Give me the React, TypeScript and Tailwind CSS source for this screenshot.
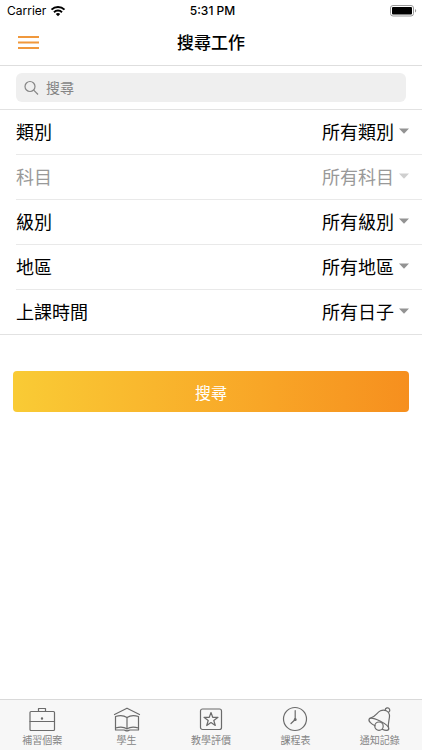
import type { ReactNode } from "react";

type Field = { id: string; label: string; value: string; disabled?: boolean };

const fields: Field[] = [
  { id: "category", label: "類別", value: "所有類別" },
  { id: "subject", label: "科目", value: "所有科目", disabled: true },
  { id: "level", label: "級別", value: "所有級別" },
  { id: "district", label: "地區", value: "所有地區" },
  { id: "time", label: "上課時間", value: "所有日子" },
];

function StatusBar() {
  return (
    <div className="flex h-5 items-center pt-[2px] pr-1 pl-[7px] text-xs text-black">
      <div className="flex flex-1 items-center gap-1">
        <span>Carrier</span>
        <svg className="h-3 w-4" viewBox="0 0 16 12" fill="none" stroke="#000" strokeWidth="2">
          <path d="M1.5 4.6a9.3 9.3 0 0 1 13 0" />
          <path d="M4 7.2a5.7 5.7 0 0 1 8 0" />
          <path d="M5.8 9a3.1 3.1 0 0 1 4.4 0L8 11.3z" fill="#000" stroke="none" />
        </svg>
      </div>
      <span className="font-medium">5:31 PM</span>
      <div className="flex flex-1 justify-end">
        <svg className="h-3 w-7" viewBox="0 0 28 12" aria-label="Battery">
          <rect x="0.5" y="0.5" width="23" height="10.5" rx="2.5" fill="none" stroke="#999" />
          <rect x="2" y="2" width="20" height="7.5" rx="1" fill="#000" />
          <path d="M25 4v3.5c1.6-.5 1.6-3 0-3.5z" fill="#999" />
        </svg>
      </div>
    </div>
  );
}

function SelectRow({ field, last }: { field: Field; last: boolean }) {
  return (
    <div
      className={
        "flex items-center justify-between pt-[2px] text-lg " +
        (last ? "h-11 " : "h-[45px] border-b border-[#e9e9e9] ") +
        (field.disabled ? "text-[#999]" : "text-black")
      }
    >
      <label htmlFor={field.id}>{field.label}</label>
      <div className="relative">
        <select
          id={field.id}
          disabled={field.disabled}
          className="h-10 w-40 appearance-none bg-transparent pr-7 [text-align-last:right] opacity-100 outline-none"
        >
          <option>{field.value}</option>
        </select>
        <svg
          className={
            "pointer-events-none absolute top-[15px] right-3 h-[6px] w-3 " +
            (field.disabled ? "text-[#cfcfcf]" : "text-[#939393]")
          }
          viewBox="0 0 12 6"
          fill="currentColor"
        >
          <path d="M1 0.5h10L6 5.7z" />
        </svg>
      </div>
    </div>
  );
}

function TabIcon({ children }: { children: ReactNode }) {
  return (
    <svg
      className="h-7 w-7"
      viewBox="0 0 28 28"
      fill="none"
      stroke="#6b6b6b"
      strokeWidth="1.2"
      strokeLinecap="round"
      strokeLinejoin="round"
    >
      {children}
    </svg>
  );
}

const tabs: { label: string; icon: ReactNode }[] = [
  {
    label: "補習個案",
    icon: (
      <>
        <rect x="2" y="7.5" width="24.5" height="19" rx="1" />
        <path d="M10.5 7.500V4.500h7v3M2 17.500h24.500" />
        <circle cx="14" cy="14.500" r="0.6" fill="#6b6b6b" />
      </>
    ),
  },
  {
    label: "學生",
    icon: (
      <>
        <path d="M1.500 10.500 14 4.200l12.500 6.300" />
        <path d="M14 13.500C11 11.500 6 11.300 2.500 12.500V24c3.500-1 8.500-1 11.500.8 3-1.800 8-1.800 11.500-.8V12.500c-3.500-1.200-8.500-1-11.500 1z" />
        <path d="M14 13.500v11.300M2.500 24v2H11c1 0 1.500.8 3 .8s2-.8 3-.8h8.500v-2" />
      </>
    ),
  },
  {
    label: "教學評價",
    icon: (
      <>
        <rect x="3.500" y="5" width="21" height="20.500" rx="2" />
        <path d="m14 8.500 1.700 4.800H21l-4.200 3.200 1.500 5L14 18.500l-4.300 3 1.500-5L7 13.300h5.300z" />
      </>
    ),
  },
  {
    label: "課程表",
    icon: (
      <>
        <circle cx="14" cy="15" r="11.500" />
        <path d="M14.200 6.500v9L10 19.500" />
        <circle cx="14.200" cy="15.500" r="0.900" fill="#6b6b6b" />
      </>
    ),
  },
  {
    label: "通知記錄",
    icon: (
      <>
        <path d="M3.500 14.500C10 13 10.500 8.500 14.500 6.700c4-1.600 8.500.3 9 4.300.5 4.500-2.500 8.500-.8 14" />
        <path d="M3.500 14.500c-2 2.500 2 5.500 5.500 7.300M16.200 25.200c3 1.500 6 1.800 6.500-.2.500-2.500-4.200-5.700-8.700-8-4-2-8.500-3.800-10.500-2.500" />
        <circle cx="13" cy="22.200" r="4.200" />
        <path d="M19.200 6.300a2.300 2.300 0 1 1 3.600 1.700" />
      </>
    ),
  },
];

export default function App() {
  return (
    <div className="flex min-h-screen flex-col bg-white font-[Inter,'Noto_Sans_CJK_TC',sans-serif]">
      <StatusBar />
      <header className="grid h-[46px] grid-cols-3 items-center border-b border-[#dedede] px-4">
        <button type="button" aria-label="選單" className="w-fit">
          <svg className="h-6 w-6" viewBox="0 0 24 24" stroke="#f0983c" strokeWidth="2">
            <path d="M2 6h21M2 11.500h21M2 17h21" />
          </svg>
        </button>
        <h1 className="pt-[2px] text-center text-[17px] font-medium text-black">搜尋工作</h1>
      </header>
      <main>
        <form onSubmit={(e) => e.preventDefault()}>
          <div className="border-b border-[#e2e2e2] px-4 py-[7px]">
            <label className="flex h-[29px] items-center gap-[6px] rounded-md bg-[#efefef] px-2">
              <svg className="h-4 w-4" viewBox="0 0 16 16" fill="none" stroke="#858585" strokeWidth="1.200">
                <circle cx="6" cy="6.500" r="5" />
                <path d="m9.700 10.200 4.300 4.300" />
              </svg>
              <input
                type="search"
                aria-label="搜尋"
                placeholder="搜尋"
                className="min-w-0 flex-1 bg-transparent text-sm outline-none placeholder:text-[#858585]"
              />
            </label>
          </div>
          <div className="border-b border-[#e2e2e2] pl-4">
            {fields.map((f, i) => (
              <SelectRow key={f.id} field={f} last={i === fields.length - 1} />
            ))}
          </div>
          <div className="px-[13px] pt-9">
            <button
              type="submit"
              className="h-[41px] w-full rounded bg-linear-to-r from-[#f9cb35] to-[#f68f1e] pt-[2px] text-base text-white"
            >
              搜尋
            </button>
          </div>
        </form>
      </main>
      <nav className="mt-auto grid h-[51px] grid-cols-5 border-t border-[#d9d9d9] bg-[#f7f7f7]">
        {tabs.map((t) => (
          <button key={t.label} type="button" className="flex flex-col items-center pt-1 text-[10px] leading-4 text-[#858585]">
            <TabIcon>{t.icon}</TabIcon>
            <span>{t.label}</span>
          </button>
        ))}
      </nav>
    </div>
  );
}
